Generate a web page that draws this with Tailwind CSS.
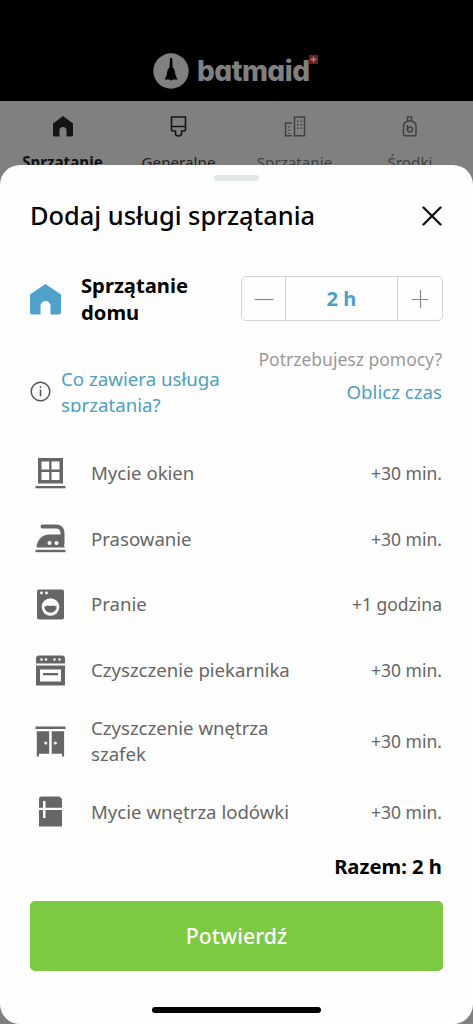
<!DOCTYPE html>
<html lang="pl">
<head>
<meta charset="utf-8">
<meta name="viewport" content="width=device-width, initial-scale=1">
<title>Batmaid</title>
<script src="https://cdn.jsdelivr.net/npm/@tailwindcss/browser@4"></script>
</head>
<body class="w-[473px] h-[1024px] overflow-hidden bg-[#808080] font-['Noto_Sans',sans-serif] flex flex-col">
<header class="h-[101px] shrink-0 bg-black flex items-end pl-[153px] pb-[12px]">
  <svg class="w-9 h-9" viewBox="0 0 36 36"><circle cx="18" cy="18" r="17.7" fill="#808080"/><path d="M17 5h2.200l.4 9.500c2.600 1.500 2.200 5.500 3.300 8.500l1.600 3.500h-4.900a1.600 1.600 0 0 1-3 0h-4.900l1.600-3.500c1.100-3 .7-7 3.300-8.500z" fill="#000"/></svg>
  <div class="relative ml-[8px] h-9 w-[113px] text-[#808080]">
    <span class="absolute left-0 top-[1px] font-['Inter',sans-serif] font-extrabold text-[28px] leading-[35px] tracking-[-0.5px] [font-feature-settings:'cv11']">batmaid</span>
    <svg class="absolute left-[112px] top-[2px] w-[9px] h-[9px]" viewBox="0 0 9 9"><path fill="#6e1d1f" d="M0 0h9v9H0z"/><path stroke="#a08080" stroke-width="1.500" d="M4.500 1.500v6M1.500 4.500h6"/></svg>
  </div>
</header>
<nav class="h-[64px] shrink-0 overflow-hidden grid grid-cols-[125px_107px_125px_106px] text-[15.200px] text-[#404040] text-center leading-[22px]">
  <div class="flex flex-col items-center pt-[15px] gap-[14px] text-[#111] font-bold"><svg class="w-[22px] h-[21px] shrink-0" viewBox="0 0 22 21"><path fill="#151515" d="M11 0 21 7.500V19a1.500 1.500 0 0 1-1.500 1.500H14.500V14.500a3.500 3.500 0 0 0-7 0v6H2.500A1.500 1.500 0 0 1 1 19V7.500z"/></svg><span>Sprzątanie</span></div>
  <div class="flex flex-col items-center pt-[15px] gap-[14px] text-[#222]"><svg class="w-[17px] h-[21px] shrink-0" viewBox="0 0 17 21" fill="none" stroke="#151515" stroke-width="1.600" stroke-linejoin="round"><path d="M1.500 1h14v12.500c0 1-.5 1.500-1.500 1.500h-2.500v2.500c0 1.500-1.500 2.500-3 2.500s-3-1-3-2.500V15H3c-1 0-1.500-.5-1.500-1.500zM1.500 10.500h14"/></svg><span>Generalne</span></div>
  <div class="flex flex-col items-center pt-[15px] gap-[14px]"><svg class="w-[22px] h-[21px] shrink-0" viewBox="0 0 22 21" fill="none" stroke="#404040" stroke-width="1.500"><path d="M10.500 1h10v18.700h-10zM8 7H1.500v12.700H8"/><path stroke-dasharray="1.500 2" d="M13.700 4.500v9M17.300 4.500v9M5 10v8"/></svg><span>Sprzątanie</span></div>
  <div class="flex flex-col items-center pt-[15px] gap-[14px]"><svg class="w-[16px] h-[21px] shrink-0" viewBox="0 0 16 21" fill="none" stroke="#404040" stroke-width="1.500"><path d="M5.500 5V1h4v4M6 5c-2.500 1-4.500 2-4.500 4.500V18a1.700 1.700 0 0 0 1.700 1.700h9A1.700 1.700 0 0 0 14 18V9.500C14 7 12 6 9.500 5zM5.300 9v5"/><circle cx="8" cy="13.500" r="2.500"/></svg><span>Środki</span></div>
</nav>
<main class="h-[859px] shrink-0 bg-[#fefefe] rounded-[20px] flex flex-col pl-[30px] pr-[31px] text-[#666]">
  <div class="mt-[10px] w-[45px] h-[6px] rounded-full bg-[#e3e7e7] self-center shrink-0"></div>
  <div class="mt-[17px] h-[36px] flex items-center justify-between shrink-0">
    <h1 class="text-[25.400px] leading-[34px] pb-[2px] font-medium text-black whitespace-nowrap">Dodaj usługi sprzątania</h1>
    <svg class="w-5 h-5" viewBox="0 0 20 20"><path d="M1.500 1.500l17 17M18.500 1.500l-17 17" stroke="#111" stroke-width="2.300" stroke-linecap="round"/></svg>
  </div>
  <div class="mt-[38px] h-[54px] flex shrink-0">
    <svg class="mt-[12px] w-[31px] h-[31px] shrink-0" viewBox="0 0 31 31"><path fill="#4da1cb" d="M15.500 0 31 10.500V28a2.500 2.500 0 0 1-2.500 2.500H20.500V22a5 5 0 0 0-10 0v8.500H2.500A2.500 2.500 0 0 1 0 28V10.500z"/></svg>
    <h2 class="ml-[20px] w-[130px] text-[20.200px] leading-[27px] font-bold text-black">Sprzątanie<br>domu</h2>
    <div class="mt-[4px] ml-auto w-[202px] h-[45px] mr-[-1px] border border-[#d4d4d4] rounded-[5px] grid grid-cols-[44px_1fr_44px] divide-x divide-[#d4d4d4]">
      <div class="grid place-items-center"><svg class="w-5 h-5" viewBox="0 0 20 20"><path d="M.5 10.500h19" stroke="#888" stroke-width="1.200"/></svg></div>
      <div class="grid place-items-center text-[20.200px] font-bold text-[#4da1cb]">2 h</div>
      <div class="grid place-items-center"><svg class="w-[18px] h-[18px]" viewBox="0 0 18 18"><path d="M.5 9.500h17M9.500 0v18" stroke="#888" stroke-width="1.200"/></svg></div>
    </div>
  </div>
  <div class="mt-[20px] h-[67px] flex justify-between shrink-0 text-[18.700px]">
    <div class="flex text-[#4f9fc0]">
      <svg class="mt-[35px] w-[21px] h-[21px]" viewBox="0 0 21 21"><circle cx="10.500" cy="10.500" r="9.300" fill="none" stroke="#555" stroke-width="1.500"/><path d="M10.500 8.500v7M10.500 5.200v1.800" stroke="#555" stroke-width="1.500"/></svg>
      <p class="ml-[10px] mt-[20px] h-[46px] overflow-hidden leading-[26px] whitespace-nowrap">Co zawiera usługa<br>sprzątania?</p>
    </div>
    <div class="text-right whitespace-nowrap">
      <p class="leading-[27px] text-[17.500px] text-[#999]">Potrzebujesz pomocy?</p>
      <p class="mt-[5px] leading-[27px] text-[#4f9fc0]">Oblicz czas</p>
    </div>
  </div>
  <ul class="mt-[27px] shrink-0 text-[18.600px] leading-[26px]">
    <li class="h-[66px] flex items-center"><svg class="ml-[5px] mr-[25px] w-[31px] h-[31px]" viewBox="0 0 31 31" fill="#666"><path fill-rule="evenodd" d="M3 0h25v25.500H3zM6.500 3.500v8h7.700v-8zm10 0v8h8v-8zm-10 10.500v8h7.700v-8zm10 0v8h8v-8z"/><path d="M.5 28h30v2.300H.5z"/></svg><span>Mycie okien</span><span class="ml-auto text-[17.500px]">+30 min.</span></li>
    <li class="h-[65px] flex items-center"><svg class="ml-[5px] mr-[25px] w-[31px] h-[31px]" viewBox="0 0 31 31" fill="#666"><path d="M7.500 3.500H21c4 0 6 2 6.500 6V20" fill="none" stroke="#666" stroke-width="4" stroke-linecap="round"/><path d="M1.500 24.500C2 17 7 11.500 14 11.500h14L29.500 24.500z"/><circle cx="14.500" cy="20" r="2" fill="#fff"/><circle cx="21.500" cy="20" r="2" fill="#fff"/><path d="M.5 26.800h30v2.400H.5z"/></svg><span>Prasowanie</span><span class="ml-auto text-[17.500px]">+30 min.</span></li>
    <li class="h-[66px] flex items-center"><svg class="ml-[5px] mr-[25px] w-[31px] h-[31px]" viewBox="0 0 31 31" fill="#666"><rect x="2" y=".5" width="27" height="30" rx="2"/><circle cx="6.500" cy="4" r="1.400" fill="#fff"/><circle cx="11.500" cy="4" r="1.400" fill="#fff"/><circle cx="15.500" cy="18" r="8.800" fill="#fff"/><path d="M9.300 17.500c2 0 2.200-1 3.200-1s2 .5 3 .5 2-.5 3-.5 1.200 1 3.200 1a6.200 6.200 0 0 1-12.400 0z"/></svg><span>Pranie</span><span class="ml-auto text-[17.500px]">+1 godzina</span></li>
    <li class="h-[66px] flex items-center"><svg class="ml-[5px] mr-[25px] w-[31px] h-[31px]" viewBox="0 0 31 31" fill="#666"><path d="M1 8.500V3.500a3 3 0 0 1 3-3h23a3 3 0 0 1 3 3v5z"/><g fill="#fff"><circle cx="6.500" cy="4.500" r="1.200"/><circle cx="11" cy="4.500" r="1.200"/><circle cx="19.500" cy="4.500" r="1.200"/><circle cx="24.500" cy="4.500" r="1.200"/></g><path fill-rule="evenodd" d="M1 10.500h29v20H1zM5 14.500v12h21v-12z"/><path d="M8 18h15v2.300H8z"/></svg><span>Czyszczenie piekarnika</span><span class="ml-auto text-[17.500px]">+30 min.</span></li>
    <li class="h-[76px] flex items-center"><svg class="ml-[5px] mr-[25px] w-[31px] h-[31px]" viewBox="0 0 31 31" fill="#666"><path d="M.5.500h30v2.500H.5zM1.800 5.300h12.400v22.500H4v2.700H1.800zM16.700 5.300h12.400v25.200H27v-2.700H16.700z"/><circle cx="10.700" cy="17" r="1.600" fill="#fff"/><circle cx="20.300" cy="17" r="1.600" fill="#fff"/></svg><span>Czyszczenie wnętrza<br>szafek</span><span class="ml-auto text-[17.500px]">+30 min.</span></li>
    <li class="h-[65px] flex items-center"><svg class="ml-[5px] mr-[25px] w-[31px] h-[31px]" viewBox="0 0 31 31" fill="#666"><path d="M4 11.700V3a2.500 2.500 0 0 1 2.500-2.500h18L27 3v8.700zM4 14h23v16.500H4z"/><path d="M8 5h2.500v17H8z" fill="#fff"/></svg><span>Mycie wnętrza lodówki</span><span class="ml-auto text-[17.500px]">+30 min.</span></li>
  </ul>
  <p class="mt-[8px] shrink-0 text-right text-[20.200px] leading-[28px] font-bold text-black">Razem: 2 h</p>
  <button class="mt-[21px] mr-[-1px] h-[70px] shrink-0 rounded-[5px] bg-[#7cc942] text-white text-[21.300px] font-medium">Potwierdź</button>
  <div class="mt-[36px] w-[169px] h-[6px] rounded-full bg-black self-center shrink-0"></div>
</main>
</body>
</html>
